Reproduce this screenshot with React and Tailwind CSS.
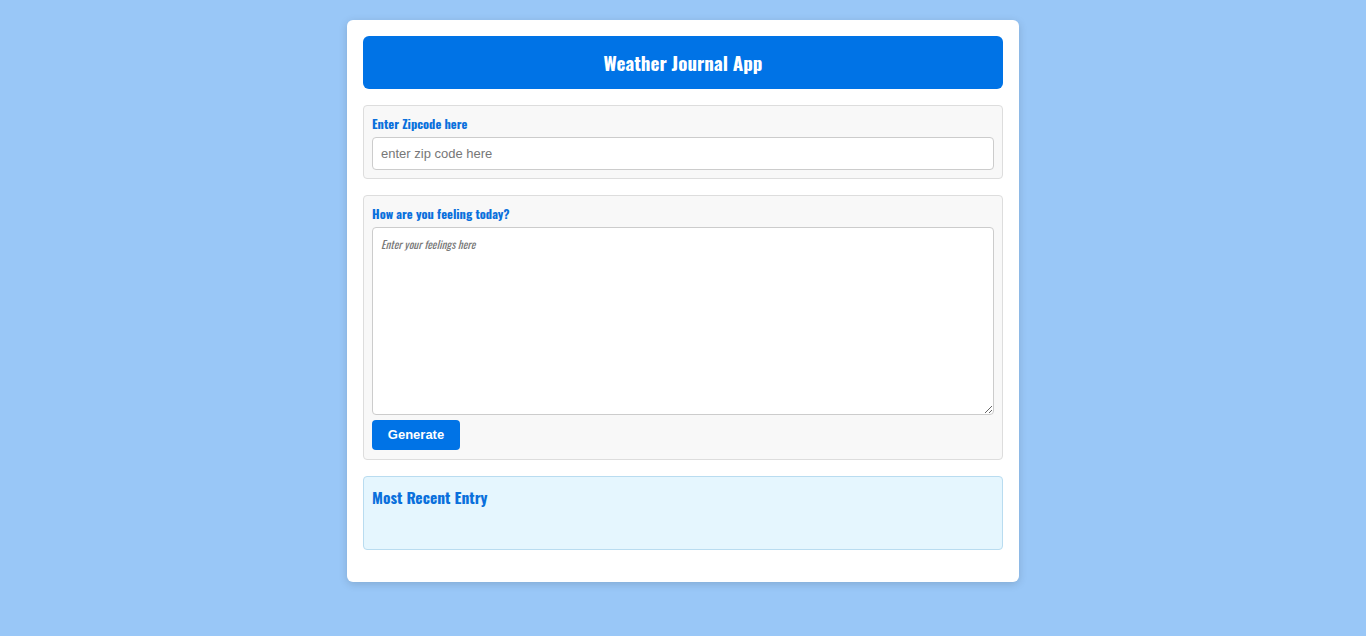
export default function App() {
  const cond = { fontFamily: '"Oswald", "Liberation Sans Narrow", "DejaVu Sans Condensed", "Roboto Condensed", sans-serif' };
  return (
    <div className="min-h-[636px] w-full bg-[#99c7f7] pt-5 pb-5">
      <div className="mx-auto w-[672px] rounded-md bg-white p-4 shadow-[0_2px_8px_rgba(0,0,0,0.15)]">
        <div className="flex h-[53px] items-center justify-center rounded-md bg-[#0073e6]">
          <h1 className="text-[19px] font-bold text-white" style={cond}>Weather Journal App</h1>
        </div>
        <div className="mt-4 rounded border border-[#dddddd] bg-[#f8f8f8] px-2 pt-[8px] pb-2">
          <label className="block h-[23px] text-[12.5px] font-bold leading-[20px] text-[#0a70dc]" style={cond}>Enter Zipcode here</label>
          <input
            className="block h-[33px] w-full rounded border border-[#cccccc] bg-white px-2 text-[13px] text-[#333] placeholder:text-[#777]"
            style={{ fontFamily: '"Liberation Sans", Arial, sans-serif' }}
            placeholder="enter zip code here"
          />
        </div>
        <div className="mt-4 rounded border border-[#dddddd] bg-[#f8f8f8] px-2 pt-[8px] pb-[9px]">
          <label className="block h-[23px] text-[12.5px] font-bold leading-[20px] text-[#0a70dc]" style={cond}>How are you feeling today?</label>
          <textarea
            className="block h-[188px] w-full rounded border border-[#cccccc] bg-white px-2 py-2 text-[11px] italic text-[#333] placeholder:text-[#777]"
            style={cond}
            placeholder="Enter your feelings here"
          />
          <button
            className="mt-[5px] block h-[30px] w-[88px] rounded bg-[#0073e6] text-[13px] font-bold text-white"
            style={{ fontFamily: '"Liberation Sans", Arial, sans-serif' }}
          >
            Generate
          </button>
        </div>
        <div className="mt-4 h-[74px] rounded border border-[#b9dcf0] bg-[#e5f6fe] px-2 pt-[8px]">
          <h2 className="text-[15.5px] font-bold leading-[24px] text-[#0a70dc]" style={cond}>Most Recent Entry</h2>
        </div>
        <div className="h-4" />
      </div>
    </div>
  );
}
